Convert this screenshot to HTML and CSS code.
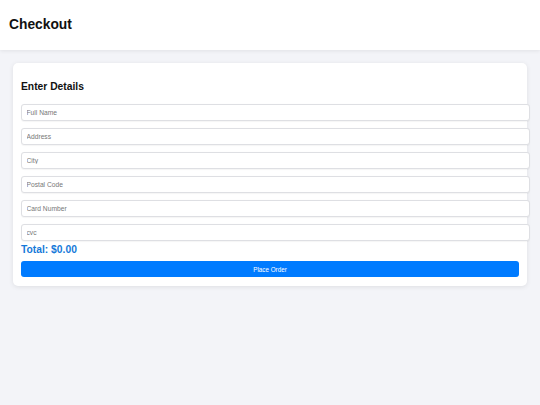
FILE: index.html
```html
<!DOCTYPE html>
<html lang="en">
<head>
<meta charset="utf-8">
<title>Checkout</title>
<link rel="stylesheet" href="styles.css">
</head>
<body>
  <header class="topbar">
    <h1 class="title">Checkout</h1>
  </header>
  <main class="content">
    <section class="card">
      <h2 class="card-title">Enter Details</h2>
      <form class="form">
        <input class="field" type="text" placeholder="Full Name">
        <input class="field" type="text" placeholder="Address">
        <input class="field" type="text" placeholder="City">
        <input class="field" type="text" placeholder="Postal Code">
        <input class="field" type="text" placeholder="Card Number">
        <input class="field" type="text" placeholder="cvc">
        <div class="total">Total: $0.00</div>
        <button class="submit" type="button">Place Order</button>
      </form>
    </section>
  </main>
</body>
</html>
```
FILE: styles.css
```css
* { margin: 0; }

html, body {
  height: 100%;
}

body {
  background: #f3f4f8;
  font-family: "Liberation Sans", Arial, sans-serif;
  color: #111;
}

.topbar {
  box-sizing: border-box;
  height: 50px;
  padding: 16.5px 9px 0;
  background: #fff;
  box-shadow: 0 1px 4px rgba(0, 0, 0, 0.08);
}

.title {
  font-size: 13.8px;
  font-weight: bold;
  line-height: normal;
}

.content {
  padding: 13px 13px 0;
}

.card {
  background: #fff;
  border-radius: 5px;
  padding: 8px 8px 8.5px;
  box-shadow: 0 1px 5px rgba(0, 0, 0, 0.09);
}

.card-title {
  font-size: 10.3px;
  font-weight: bold;
  line-height: normal;
  margin: 9.5px 0 12.8px;
}

.form {
  display: flex;
  flex-direction: column;
}

.field {
  display: block;
  width: 100%;
  height: 15px;
  padding: 0 4.5px;
  margin-bottom: 7px;
  border: 1px solid #dedfe3;
  border-radius: 3px;
  background: #fff;
  font-family: "Liberation Sans", Arial, sans-serif;
  font-size: 6.7px;
  color: #333;
  box-shadow: 0 0.5px 1px rgba(0, 0, 0, 0.04);
}

.field:last-of-type {
  margin-bottom: 0;
}

.field::placeholder {
  color: #777;
}

.total {
  margin-top: 2.5px;
  font-size: 10.3px;
  font-weight: bold;
  line-height: normal;
  color: #1479d9;
}

.submit {
  margin-top: 6.5px;
  height: 16px;
  border: none;
  border-radius: 3px;
  background: #007bff;
  color: #fff;
  font-family: "Liberation Sans", Arial, sans-serif;
  font-size: 6.3px;
  padding: 0;
}
```
